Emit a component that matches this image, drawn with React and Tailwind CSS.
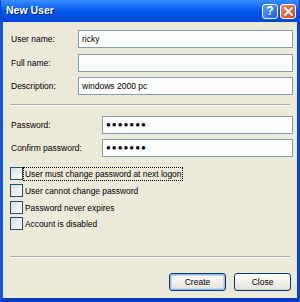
const font = { fontFamily: '"Liberation Sans", Arial, sans-serif' };

const TextBox = ({ value, password }) => (
  <div
    className={`h-[18px] flex-1 border border-[#7F9DB9] bg-[#FDFFFC] flex items-center pl-[3px] text-black ${password ? 'font-bold tracking-[1px] text-[8px]' : 'text-[8.5px]'}`}
  >
    {value}
  </div>
);

const Field = ({ label, value, labelWidth, password, className = '' }) => (
  <div className={`flex items-center ${className}`}>
    <span className={`${labelWidth} shrink-0 text-[8.5px] text-black pl-[4px]`}>{label}</span>
    <TextBox value={value} password={password} />
  </div>
);

const Check = ({ label, focus, className = '' }) => (
  <div className={`flex items-center h-[13px] ${className}`}>
    <div className="w-[13px] h-[13px] ml-[3px] border border-[#1C5180] bg-gradient-to-br from-[#DCDCD7] to-[#FFFFFF] shrink-0" />
    <span
      className={`px-[1px] text-[8.4px] leading-[12px] text-black border border-dotted ${focus ? 'border-black' : 'border-transparent'}`}
    >
      {label}
    </span>
  </div>
);

const Separator = ({ className = '' }) => (
  <div className={`mx-[3px] border-t border-[#ACA899] border-b border-b-white ${className}`} />
);

const Button = ({ children, primary }) => (
  <button
    className={`w-[57px] h-[18px] rounded-[3px] border border-[#003C74] bg-gradient-to-b from-[#FFFFFF] to-[#E3E2DA] text-[8.5px] text-black flex items-center justify-center ${primary ? 'shadow-[inset_0_0_0_1px_#9DB9EB,inset_0_0_0_2px_#BCD4F6]' : 'shadow-[inset_0_-1px_0_#D6D0C5]'}`}
  >
    {children}
  </button>
);

export default function App() {
  return (
    <div className="w-[300px] h-[302px] flex flex-col select-none" style={font}>
      <div className="h-[22px] flex items-center justify-between px-[5px] bg-gradient-to-b from-[#3A8CFF] via-[#0058EE] to-[#0046D6] border-x border-[#0A3FC8]">
        <span className="text-[10.5px] font-bold text-white [text-shadow:1px_1px_0_#0A1E6E]">New User</span>
        <div className="flex items-center gap-[2px] -mr-[2px]">
          <div className="w-[16px] h-[15px] rounded-[3px] border border-white bg-gradient-to-br from-[#5C9BFF] to-[#1D5EE8] flex items-center justify-center text-white font-bold text-[12px] leading-none">
            ?
          </div>
          <div className="w-[16px] h-[15px] rounded-[3px] border border-white bg-gradient-to-br from-[#F08C6B] to-[#D6401A] flex items-center justify-center">
            <svg width="9" height="9" viewBox="0 0 9 9">
              <path d="M1 1 L8 8 M8 1 L1 8" stroke="white" strokeWidth="1.8" strokeLinecap="square" />
            </svg>
          </div>
        </div>
      </div>
      <div className="flex-1 flex flex-col bg-[#ECE9D8] border-l-[3px] border-r-[3px] border-b-[4px] border-l-[#0B58E6] border-r-[#0B44D0] border-b-[#0A3ABD] pl-[4px] pr-[4px] pt-[8px]">
        <Field label="User name:" value="ricky" labelWidth="w-[71px]" />
        <Field label="Full name:" value="" labelWidth="w-[71px]" className="mt-[6px]" />
        <Field label="Description:" value="windows 2000 pc" labelWidth="w-[71px]" className="mt-[5px]" />
        <Separator className="mt-[9px]" />
        <Field label="Password:" value="●●●●●●●" labelWidth="w-[95px]" password className="mt-[10px]" />
        <Field label="Confirm password:" value="●●●●●●●" labelWidth="w-[95px]" password className="mt-[5px]" />
        <Check label="User must change password at next logon" focus className="mt-[10px]" />
        <Check label="User cannot change password" className="mt-[4px]" />
        <Check label="Password never expires" className="mt-[4px]" />
        <Check label="Account is disabled" className="mt-[3px]" />
        <Separator className="mt-[26px]" />
        <div className="flex justify-end gap-[8px] mt-[15px] pr-[2px]">
          <Button primary>Create</Button>
          <Button>Close</Button>
        </div>
      </div>
    </div>
  );
}
